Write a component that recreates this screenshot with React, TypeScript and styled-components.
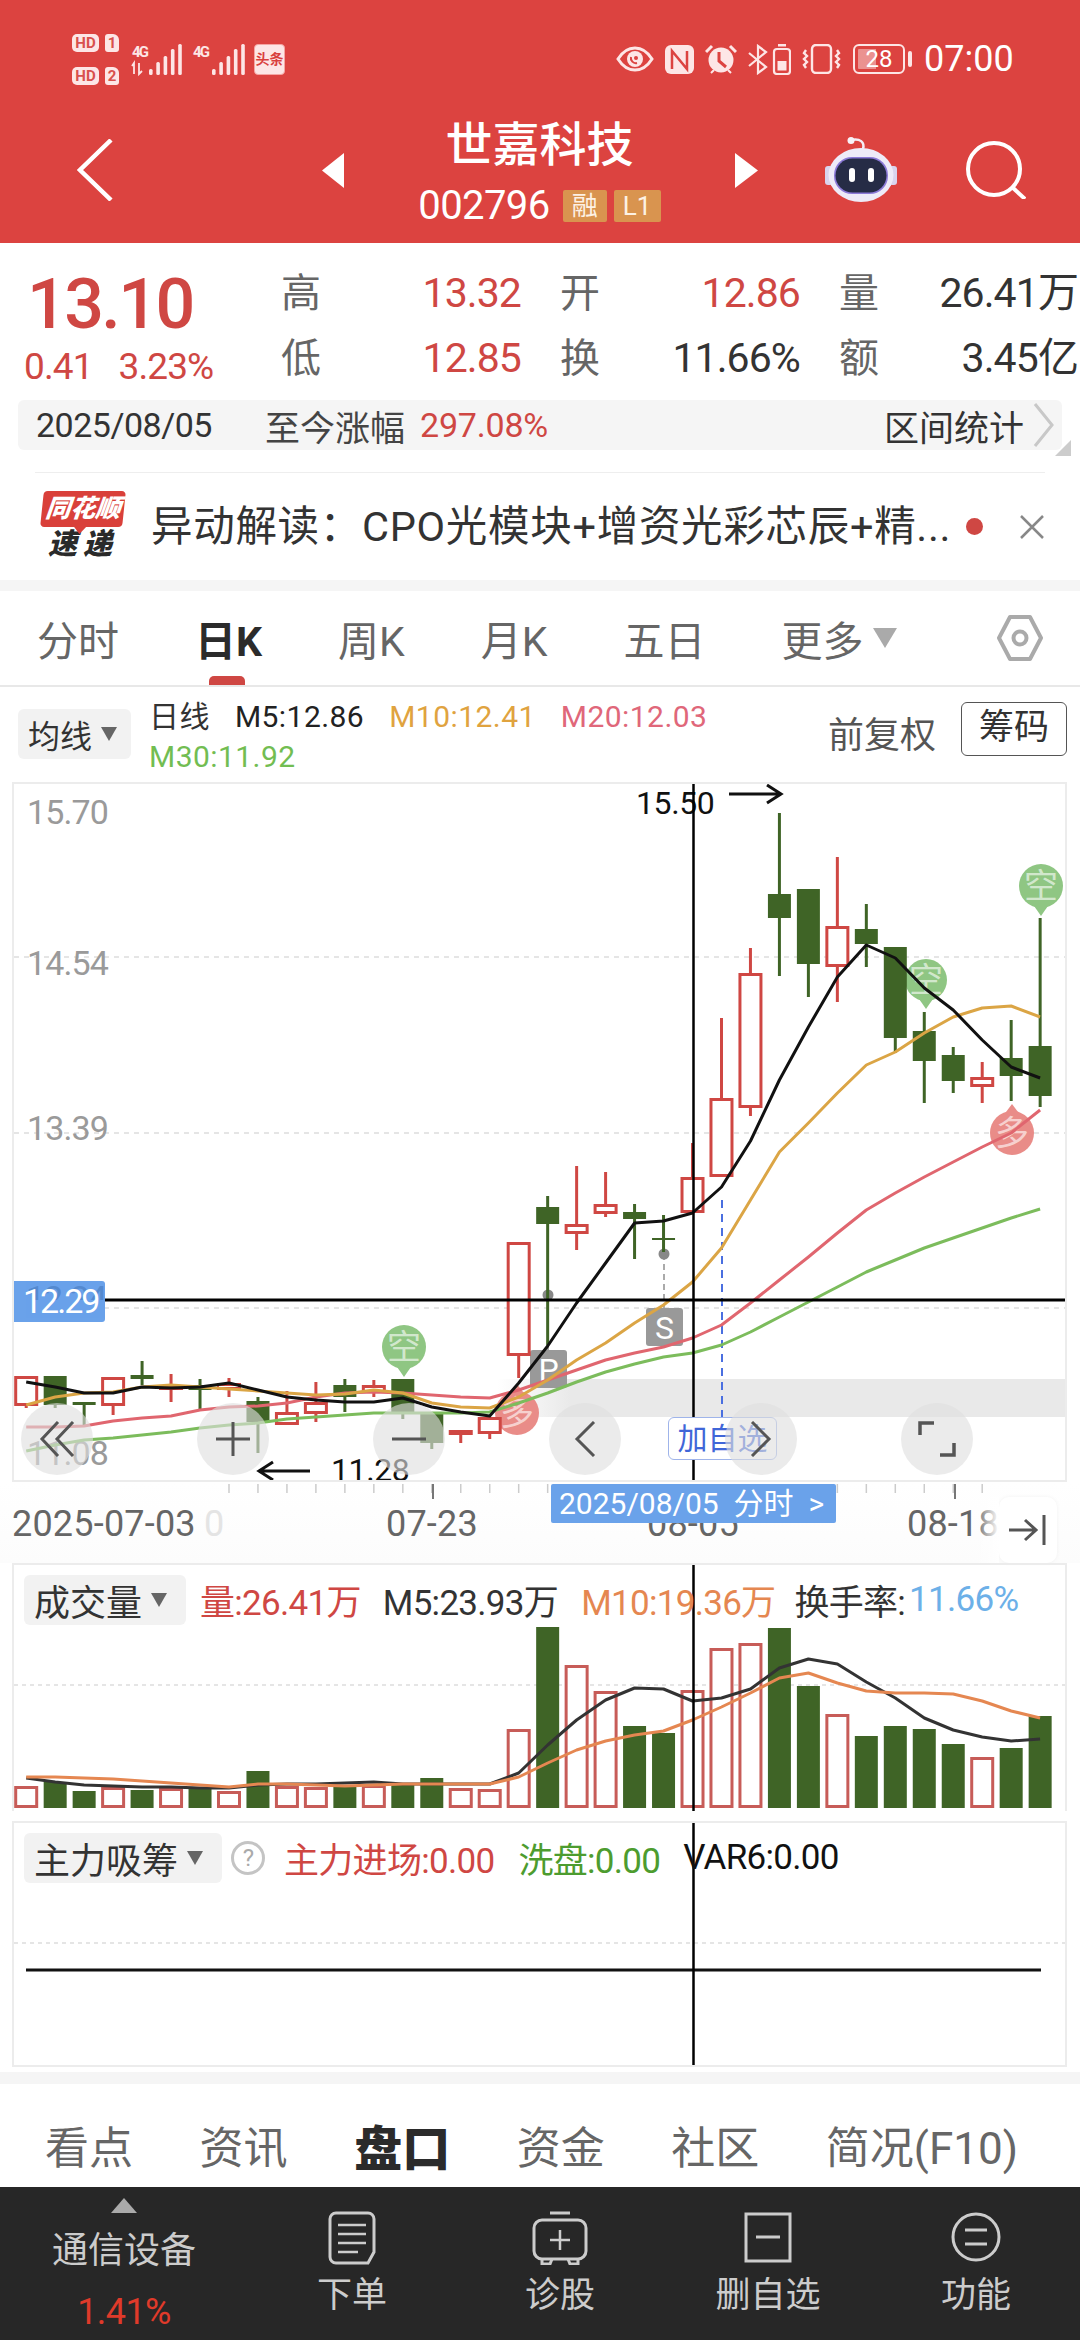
import React from 'react';
import styled, { createGlobalStyle } from 'styled-components';

const RED = '#cf4743';
const GREEN = '#3f6426';
const BLUE = '#6aa2ea';
const FONT = `Roboto, "Noto Sans CJK SC", sans-serif`;

const GlobalStyle = createGlobalStyle`
  html, body { margin: 0; padding: 0; background: #fff; }
  * { box-sizing: border-box; }
  body { font-family: ${FONT}; }
`;

const Page = styled.div`
  width: 1080px;
  height: 2340px;
  overflow: hidden;
  background: #fff;
  color: #333;
`;

/* header */
const Header = styled.header`
  height: 243px;
  background: #dc4340;
  color: #fff;
`;
const StatusBar = styled.div`
  height: 118px;
  padding: 0 72px;
  display: flex;
  align-items: center;
  justify-content: space-between;
`;
const StatusGroup = styled.div`
  display: flex;
  align-items: center;
  gap: 11px;
`;
const HdStack = styled.div`
  display: flex;
  flex-direction: column;
  gap: 15px;
  margin-right: 2px;
`;
const HdRow = styled.div`
  display: flex;
  gap: 6px;
`;
const HdBox = styled.span`
  height: 18px;
  width: 14px;
  background: #fde6e6;
  color: #d9504d;
  border-radius: 3px 6px 3px 3px;
  font-size: 15px;
  line-height: 18px;
  font-weight: 700;
  text-align: center;
  &:first-child { width: 27px; border-radius: 5px; }
`;
const NewsBadge = styled.span`
  width: 31px;
  height: 31px;
  background: #fde6e6;
  border: 1px solid #f5a5a3;
  color: #d9403d;
  border-radius: 4px;
  font-size: 14px;
  line-height: 29px;
  font-weight: 700;
  text-align: center;
  white-space: nowrap;
`;
const ClockText = styled.span`
  font-size: 36px;
  line-height: 40px;
  letter-spacing: 0;
  width: 84px;
`;
const BatteryBody = styled.div`
  width: 52px;
  height: 30px;
  border: 2px solid #fde6e6;
  border-radius: 6px;
  background: linear-gradient(90deg, rgba(255, 255, 255, 0.42) 0 42%, transparent 42%);
  background-origin: content-box;
  background-clip: content-box;
  padding: 3px;
  font-size: 24px;
  line-height: 20px;
  text-align: center;
  position: relative;
  margin-right: 8px;
  &::after {
    content: '';
    position: absolute;
    right: -9px;
    top: 5px;
    width: 4px;
    height: 16px;
    background: #fde6e6;
    border-radius: 2px;
  }
`;
const NavBar = styled.div`
  height: 125px;
  padding-bottom: 21px;
  display: grid;
  grid-template-columns: 322px 22px 391px 23px 1fr;
  align-items: center;
`;
const NavBack = styled.div`
  padding-left: 77px;
  display: flex;
`;
const NavTitle = styled.div`
  display: flex;
  flex-direction: column;
  align-items: center;
`;
const StockName = styled.div`
  font-size: 47px;
  line-height: 54px;
  font-weight: 500;
  margin-bottom: 18px;
`;
const CodeRow = styled.div`
  height: 32px;
  display: flex;
  align-items: center;
  gap: 7px;
`;
const StockCode = styled.span`
  font-size: 40px;
  line-height: 32px;
  letter-spacing: -0.6px;
  margin-right: 6px;
`;
const CodeBadge = styled.span<{ $w: number }>`
  width: ${p => p.$w}px;
  height: 32px;
  background: #d9944f;
  border-radius: 2px;
  font-size: 26px;
  line-height: 32px;
  text-align: center;
  color: #fdf1e4;
`;
const NavTools = styled.div`
  padding-left: 67px;
  display: flex;
  align-items: center;
  gap: 69px;
`;

/* quote */
const Quote = styled.section`
  height: 157px;
  display: flex;
`;
const PriceCol = styled.div`
  width: 281px;
  color: ${RED};
`;
const Price = styled.div`
  margin: 25px 0 7px 27px;
  font-size: 70px;
  line-height: 72px;
  letter-spacing: -2.6px;
  font-weight: 500;
`;
const Change = styled.div`
  padding-left: 24px;
  display: flex;
  gap: 26px;
  font-size: 37px;
  line-height: 40px;
  letter-spacing: -0.9px;
`;
const QuoteGrid = styled.div`
  margin-top: 18px;
  display: grid;
  grid-template-columns: 240px 240px 239px;
  grid-auto-rows: 65px;
  column-gap: 39px;
`;
const QuoteCell = styled.div`
  display: flex;
  justify-content: space-between;
  align-items: center;
`;
const QuoteLabel = styled.span`
  font-size: 40px;
  line-height: 65px;
  color: #666;
`;
const QuoteValue = styled.span<{ $red?: boolean }>`
  font-size: 41px;
  line-height: 65px;
  letter-spacing: -0.9px;
  color: ${p => (p.$red ? RED : '#333')};
  white-space: nowrap;
`;
const DateBar = styled.div`
  margin: 0 18px;
  height: 50px;
  padding: 0 8px 0 18px;
  background: #f5f5f5;
  border-radius: 6px;
  display: flex;
  align-items: center;
  font-size: 34px;
  position: relative;
  &::after {
    content: '';
    position: absolute;
    right: -9px;
    bottom: -6px;
    border-style: solid;
    border-width: 0 0 16px 16px;
    border-color: transparent transparent #ccc transparent;
  }
`;
const DateText = styled.span`
  width: 229px;
  letter-spacing: -0.5px;
  color: #333;
`;
const DateLabel = styled.span`
  font-size: 35px;
  color: #444;
  margin-right: 15px;
`;
const DateGain = styled.span`
  color: ${RED};
  letter-spacing: -0.2px;
`;
const DateLink = styled.span`
  margin-left: auto;
  font-size: 35px;
  color: #333;
  margin-right: 9px;
`;
const Divider = styled.div`
  margin: 22px 35px 0;
  height: 1px;
  background: #eee;
`;
const News = styled.div`
  height: 107px;
  padding: 0 36px 0 41px;
  display: flex;
  align-items: center;
`;
const NewsLogo = styled.div`
  width: 84px;
  height: 71px;
  margin-right: 26px;
  display: flex;
  flex-direction: column;
  align-items: center;
  font-style: italic;
  font-weight: 900;
`;
const NewsLogoTop = styled.div`
  width: 82px;
  height: 36px;
  background: #d9403a;
  color: #fff;
  font-size: 25px;
  line-height: 36px;
  text-align: center;
  border-radius: 4px;
  transform: skewX(-6deg);
  position: relative;
  &::after {
    content: '';
    position: absolute;
    left: 34px;
    bottom: -7px;
    border-style: solid;
    border-width: 7px 6px 0 6px;
    border-color: #d9403a transparent transparent transparent;
  }
`;
const NewsLogoBottom = styled.div`
  font-size: 29px;
  line-height: 35px;
  letter-spacing: 6px;
  color: #2a2a2a;
`;
const NewsText = styled.div`
  width: 815px;
  font-size: 41.5px;
  line-height: 50px;
  color: #333;
  white-space: nowrap;
  letter-spacing: 0.7px;
`;
const NewsDot = styled.span`
  width: 17px;
  height: 17px;
  border-radius: 50%;
  background: ${RED};
`;
const NewsClose = styled.span`
  margin-left: auto;
  display: flex;
`;
const Band = styled.div<{ $h: number }>`
  height: ${p => p.$h}px;
  background: #f5f5f5;
`;

/* period tabs */
const PeriodTabs = styled.nav`
  height: 96px;
  padding: 0 37px;
  border-bottom: 2px solid #e8e8e8;
  display: flex;
  align-items: center;
  gap: 76px;
`;
const PeriodTab = styled.div<{ $active?: boolean }>`
  height: 94px;
  display: flex;
  align-items: center;
  font-size: 41px;
  font-weight: ${p => (p.$active ? 700 : 400)};
  color: ${p => (p.$active ? '#2b2b2b' : '#666')};
  position: relative;
  ${p =>
    p.$active &&
    `&::after {
      content: '';
      position: absolute;
      left: 14px;
      bottom: 0;
      width: 36px;
      height: 9px;
      border-radius: 5px 5px 0 0;
      background: ${RED};
    }`}
`;
const MoreCaret = styled.span`
  margin-left: 9px;
  border-style: solid;
  border-width: 20px 12px 0 12px;
  border-color: #aaa transparent transparent transparent;
`;
const SettingsIcon = styled.svg`
  margin-left: auto;
`;

/* legend */
const LegendRow = styled.div`
  height: 95px;
  padding: 0 13px 0 18px;
  display: flex;
  align-items: flex-start;
`;
const Dropdown = styled.div<{ $w: number; $fs?: number }>`
  width: ${p => p.$w}px;
  height: 50px;
  background: #f2f2f2;
  border-radius: 6px;
  display: flex;
  align-items: center;
  padding-left: 10px;
  gap: 9px;
  font-size: ${p => p.$fs ?? 36}px;
  letter-spacing: 0;
  color: #333;
  white-space: nowrap;
`;
const Caret = styled.span`
  border-style: solid;
  border-width: 14px 8px 0 8px;
  border-color: #666 transparent transparent transparent;
`;
const MaDropdown = styled(Dropdown)`
  margin-top: 22px;
`;
const MaLegend = styled.div`
  margin: 10px 0 0 18px;
  font-size: 30px;
  line-height: 40px;
`;
const MaLine = styled.div`
  display: flex;
  gap: 25px;
  white-space: nowrap;
`;
const MaValue = styled.span<{ $c: string }>`
  color: ${p => p.$c};
  letter-spacing: 0.45px;
`;
const LegendRight = styled.div`
  margin-left: auto;
  margin-top: 13px;
  display: flex;
  align-items: center;
  gap: 25px;
`;
const AdjustText = styled.span`
  font-size: 36px;
  padding-top: 6px;
  color: #555;
`;
const ChipButton = styled.div`
  width: 106px;
  height: 54px;
  border: 1px solid #555;
  border-radius: 6px;
  font-size: 35px;
  line-height: 50px;
  text-align: center;
  color: #333;
`;

/* charts */
const ChartFrame = styled.div<{ $h: number; $noBottom?: boolean }>`
  margin: 0 13px 0 12px;
  height: ${p => p.$h}px;
  border: 2px solid #ececec;
  ${p => p.$noBottom && 'border-bottom: 0;'}
  position: relative;
  overflow: hidden;
`;
const ChartSvg = styled.svg`
  display: block;
  font-family: ${FONT};
`;
const AxisPrice = styled.text`
  font-size: 34px;
  letter-spacing: -0.9px;
  fill: #9a9a9a;
`;
const MarkPrice = styled.text`
  font-size: 32px;
  letter-spacing: -0.4px;
  fill: #111;
`;
const BubbleText = styled.text`
  font-size: 34px;
  fill: #fff;
  fill-opacity: 0.62;
  text-anchor: middle;
`;
const MarkerText = styled.text`
  font-size: 32px;
  fill: #fff;
  text-anchor: middle;
`;
const CrossLabel = styled.div`
  position: absolute;
  left: -2px;
  top: 497px;
  width: 93px;
  height: 41px;
  border-radius: 3px;
  background: ${BLUE};
  color: #fff;
  font-size: 34px;
  line-height: 41px;
  letter-spacing: -2px;
  padding-left: 11px;
  overflow: hidden;
`;
const GhostPrice = styled.span`
  position: absolute;
  left: 14px;
  top: 0;
  height: 19px;
  overflow: hidden;
  color: #4c7fc4;
  font-size: 34px;
  line-height: 34px;
  letter-spacing: -1px;
  opacity: 0.7;
`;
const CrossValue = styled.span`
  position: relative;
`;
const WatchTag = styled.div`
  position: absolute;
  left: 654px;
  top: 633px;
  width: 109px;
  height: 43px;
  border: 1px solid #9fb4ea;
  border-radius: 6px;
  background: #fff;
  color: #3f66d8;
  font-size: 30px;
  line-height: 41px;
  text-align: center;
`;
const ZoomBar = styled.div`
  position: absolute;
  left: 7px;
  top: 619px;
  width: 952px;
  display: flex;
  justify-content: space-between;
`;
const ZoomButton = styled.div`
  width: 72px;
  height: 72px;
  border-radius: 50%;
  background: rgba(222, 222, 222, 0.62);
  display: flex;
  align-items: center;
  justify-content: center;
`;
const AxisRow = styled.div`
  height: 81px;
  position: relative;
  background: linear-gradient(#fff, #fcfcfc);
`;
const AxisDate = styled.text<{ $ghost?: boolean }>`
  font-size: 36px;
  fill: ${p => (p.$ghost ? '#e4e4e4' : '#666')};
  letter-spacing: 0.2px;
`;
const DateTip = styled.div`
  position: absolute;
  left: 551px;
  top: 2px;
  width: 285px;
  height: 39px;
  background: ${BLUE};
  border-radius: 2px;
  color: #fff;
  font-size: 30px;
  line-height: 39px;
  padding-left: 8px;
  white-space: pre;
`;
const JumpButton = styled.div`
  position: absolute;
  right: 23px;
  top: 15px;
  width: 58px;
  height: 66px;
  background: #fff;
  border-radius: 10px;
  box-shadow: 0 0 4px rgba(0, 0, 0, 0.05);
  display: flex;
  align-items: center;
  justify-content: center;
  &::before {
    content: '';
    position: absolute;
    left: -24px;
    top: 0;
    width: 24px;
    height: 66px;
    background: linear-gradient(90deg, rgba(255, 255, 255, 0), #fff);
  }
`;
const PanelLegend = styled.div<{ $top: number }>`
  position: absolute;
  left: 10px;
  top: ${p => p.$top}px;
  display: flex;
  align-items: center;
  font-size: 35px;
  letter-spacing: -0.7px;
  white-space: nowrap;
`;
const LegendValue = styled.span<{ $c: string; $ml: number }>`
  color: ${p => p.$c};
  margin-left: ${p => p.$ml}px;
`;
const HelpMark = styled.span`
  width: 34px;
  height: 34px;
  margin-left: 9px;
  border: 3px solid #c4c4c4;
  border-radius: 50%;
  color: #aaa;
  font-size: 24px;
  line-height: 28px;
  text-align: center;
`;
const PanelGap = styled.div`
  height: 10px;
`;
const EndGap = styled.div`
  height: 5px;
`;

/* bottom tabs + dock */
const InfoTabs = styled.nav`
  height: 103px;
  padding: 19px 62px 0 45px;
  display: flex;
  align-items: center;
  justify-content: space-between;
`;
const InfoTab = styled.span<{ $active?: boolean }>`
  font-size: ${p => (p.$active ? 48 : 44)}px;
  font-weight: ${p => (p.$active ? 900 : 400)};
  color: ${p => (p.$active ? '#2b2b2b' : '#666')};
`;
const Dock = styled.footer`
  height: 153px;
  background: #272727;
  display: grid;
  grid-template-columns: 248px repeat(4, 208px);
  color: #ccc;
`;
const SectorCell = styled.div`
  padding-top: 11px;
  display: flex;
  flex-direction: column;
  align-items: center;
`;
const SectorArrow = styled.span`
  border-style: solid;
  border-width: 0 13px 15px 13px;
  border-color: transparent transparent #aaa transparent;
`;
const SectorName = styled.span`
  margin-top: 18px;
  font-size: 36px;
  line-height: 40px;
`;
const SectorChange = styled.span`
  margin-top: 21px;
  font-size: 36px;
  line-height: 40px;
  letter-spacing: -0.6px;
  color: #e03a2a;
`;
const DockItem = styled.div`
  padding-top: 24px;
  display: flex;
  flex-direction: column;
  align-items: center;
  font-size: 35px;
  line-height: 40px;
`;
const DockIcon = styled.svg`
  display: block;
  margin-bottom: 11px;
`;

/* chart data, all in page px */
type Candle = [number, number, number, number, 'r' | 'g'];
const candles: Candle[] = [
  [1376, 1376, 1406, 1408, 'r'], [1376, 1376, 1405, 1408, 'g'], [1402, 1402, 1405, 1427, 'g'],
  [1377, 1377, 1406, 1415, 'r'], [1361, 1375, 1379, 1385, 'g'], [1374, 1385, 1387, 1402, 'r'],
  [1379, 1385, 1390, 1411, 'g'], [1378, 1383, 1390, 1397, 'r'], [1397, 1401, 1422, 1453, 'g'],
  [1391, 1412, 1425, 1425, 'r'], [1382, 1402, 1414, 1422, 'r'], [1379, 1385, 1397, 1412, 'g'],
  [1380, 1385, 1393, 1397, 'r'], [1379, 1379, 1412, 1419, 'g'], [1414, 1414, 1443, 1449, 'g'],
  [1430, 1430, 1435, 1443, 'r'], [1417, 1417, 1434, 1439, 'r'], [1242, 1242, 1356, 1378, 'r'],
  [1196, 1207, 1224, 1345, 'g'], [1166, 1224, 1234, 1250, 'r'], [1172, 1204, 1214, 1217, 'r'],
  [1204, 1212, 1219, 1259, 'g'], [1215, 1238, 1239, 1252, 'g'], [1143, 1177, 1213, 1213, 'r'],
  [1018, 1098, 1177, 1177, 'r'], [948, 973, 1108, 1116, 'r'], [813, 894, 918, 976, 'g'],
  [889, 889, 964, 997, 'g'], [857, 926, 967, 1002, 'r'], [904, 929, 944, 967, 'g'],
  [947, 947, 1038, 1053, 'g'], [1012, 1031, 1061, 1103, 'g'], [1047, 1055, 1081, 1093, 'g'],
  [1062, 1077, 1087, 1103, 'r'], [1020, 1058, 1076, 1101, 'g'], [918, 1046, 1096, 1107, 'g'],
];
const ma5 = [1382, 1387, 1393, 1393, 1387, 1388, 1387, 1383, 1390, 1397, 1400, 1402, 1402, 1398, 1407, 1412, 1416, 1383, 1346, 1303, 1263, 1223, 1221, 1213, 1187, 1141, 1080, 1027, 977, 945, 958, 988, 1010, 1040, 1067, 1078];
const ma10 = [1405, 1397, 1393, 1392, 1387, 1385, 1387, 1389, 1391, 1393, 1395, 1394, 1390, 1393, 1403, 1407, 1408, 1397, 1380, 1360, 1343, 1323, 1305, 1282, 1248, 1200, 1152, 1123, 1093, 1065, 1052, 1033, 1017, 1008, 1006, 1017];
const ma20 = [1427, 1427, 1426, 1421, 1418, 1416, 1410, 1407, 1406, 1403, 1397, 1393, 1392, 1393, 1395, 1397, 1398, 1390, 1380, 1370, 1360, 1353, 1347, 1338, 1325, 1303, 1280, 1257, 1233, 1210, 1193, 1177, 1162, 1147, 1133, 1110];
const ma30 = [1451, 1445, 1440, 1438, 1435, 1432, 1428, 1425, 1423, 1419, 1417, 1415, 1413, 1413, 1413, 1413, 1412, 1403, 1393, 1382, 1372, 1364, 1357, 1353, 1345, 1332, 1317, 1302, 1287, 1272, 1260, 1248, 1238, 1228, 1218, 1209];
const volumes = [1786, 1782, 1791, 1787, 1790, 1788, 1788, 1791, 1771, 1786, 1787, 1785, 1785, 1785, 1778, 1788, 1789, 1729, 1627, 1665, 1691, 1726, 1733, 1690, 1648, 1643, 1628, 1686, 1714, 1736, 1726, 1729, 1744, 1757, 1748, 1716];
const volM5 = [1778, 1782, 1785, 1786, 1787, 1787, 1788, 1788, 1785, 1784, 1784, 1783, 1782, 1784, 1784, 1784, 1784, 1773, 1745, 1720, 1700, 1688, 1689, 1701, 1698, 1689, 1668, 1659, 1664, 1682, 1698, 1718, 1730, 1737, 1741, 1739];
const volM10 = [1777, 1777, 1778, 1779, 1781, 1783, 1785, 1787, 1784, 1784, 1785, 1786, 1785, 1784, 1784, 1784, 1784, 1777, 1763, 1750, 1741, 1735, 1731, 1720, 1707, 1693, 1678, 1673, 1683, 1691, 1693, 1693, 1694, 1701, 1711, 1718];

const X = (i: number) => 26.2 + 28.97 * i;
const pts = (ys: number[]) => ys.map((y, i) => `${X(i).toFixed(1)},${y}`).join(' ');
const CROSS_X = 693.5;

const Line = ({ ys, c, w = 3 }: { ys: number[]; c: string; w?: number }) => (
  <polyline points={pts(ys)} fill="none" stroke={c} strokeWidth={w} strokeLinejoin="round" />
);

const Bubble = ({ x, y, r, up, label, c }: { x: number; y: number; r: number; up?: boolean; label: string; c: string }) => {
  const tipY = up ? y - r - 7 : y + r + 8;
  const baseY = up ? y - r + 5 : y + r - 5;
  return (
    <g>
      <circle cx={x} cy={y} r={r} fill={c} />
      <path d={`M${x - 9} ${baseY}L${x} ${tipY}L${x + 9} ${baseY}Z`} fill={c} />
      <BubbleText x={x} y={y + 12}>{label}</BubbleText>
    </g>
  );
};

const Signal = ({ shift, arrows }: { shift: number; arrows?: boolean }) => (
  <svg width="50" height="31" viewBox="0 0 50 31" fill="#fde6e6" overflow="visible">
    <text x="0" y="13" fontSize="15" fontWeight="700" fontFamily="Roboto" textLength="17">4G</text>
    {arrows && <path d="M2 30V19l-2 3M7 19v11l3-3" stroke="#fde6e6" strokeWidth="1.8" fill="none" />}
    {[25, 18, 12, 5, 0].map((top, k) => (
      <rect key={k} x={shift + k * 7.3} y={top} width="3.6" height={31 - top} rx="1.5" />
    ))}
  </svg>
);

const Header_ = () => (
  <Header>
    <StatusBar>
      <StatusGroup>
        <HdStack>
          <HdRow><HdBox>HD</HdBox><HdBox>1</HdBox></HdRow>
          <HdRow><HdBox>HD</HdBox><HdBox>2</HdBox></HdRow>
        </HdStack>
        <Signal shift={17} arrows />
        <Signal shift={19} />
        <NewsBadge>头条</NewsBadge>
      </StatusGroup>
      <StatusGroup>
        <svg width="38" height="26" viewBox="0 0 38 26">
          <path d="M2 13C7 5 13 2 19 2s12 3 17 11c-5 8-11 11-17 11S7 21 2 13Z" fill="none" stroke="#fde6e6" strokeWidth="3" />
          <circle cx="19" cy="13" r="8" fill="#fde6e6" />
          <path d="M15 11a5 5 0 0 0 6 6" fill="none" stroke="#dc4340" strokeWidth="2" />
          <circle cx="20" cy="12" r="2" fill="#dc4340" />
        </svg>
        <svg width="29" height="29" viewBox="0 0 29 29">
          <rect width="29" height="29" rx="6" fill="#fde6e6" />
          <path d="M7 24V6l15 18V6" fill="none" stroke="#dc4340" strokeWidth="2.5" />
        </svg>
        <svg width="32" height="30" viewBox="0 0 32 30">
          <circle cx="16" cy="16" r="12.5" fill="#fde6e6" />
          <path d="M14 8v9l7 6" fill="none" stroke="#dc4340" strokeWidth="3" />
          <path d="M1 8l6-6M31 8l-6-6" stroke="#fde6e6" strokeWidth="3" />
          <path d="M6 29l3-3M26 29l-3-3" stroke="#fde6e6" strokeWidth="2" />
        </svg>
        <svg width="43" height="31" viewBox="0 0 43 31" fill="none" stroke="#fde6e6" strokeWidth="2.2">
          <path d="M1 9l17 14-8 6V2l8 6L1 22" />
          <rect x="26" y="5" width="16" height="25" rx="3" />
          <rect x="30" y="0" width="8" height="2.5" fill="#fde6e6" stroke="none" />
          <rect x="29.5" y="17" width="9" height="9.5" fill="#fde6e6" stroke="none" />
        </svg>
        <svg width="40" height="30" viewBox="0 0 40 30" fill="none" stroke="#fde6e6" strokeWidth="2.4">
          <rect x="10" y="1" width="19" height="28" rx="4" />
          <path d="M4 6l-2 3 3 3-3 3 3 3-3 3 2 3M35 6l2 3-3 3 3 3-3 3 3 3-2 3" />
        </svg>
        <BatteryBody>28</BatteryBody>
        <ClockText>07:00</ClockText>
      </StatusGroup>
    </StatusBar>
    <NavBar>
      <NavBack>
        <svg width="36" height="62" viewBox="0 0 36 62" fill="none" stroke="#fff" strokeWidth="4.5">
          <path d="M34 1L3 31l31 30" />
        </svg>
      </NavBack>
      <svg width="22" height="35" viewBox="0 0 22 35"><path d="M22 0v35L0 17.5Z" fill="#fff" /></svg>
      <NavTitle>
        <StockName>世嘉科技</StockName>
        <CodeRow>
          <StockCode>002796</StockCode>
          <CodeBadge $w={44}>融</CodeBadge>
          <CodeBadge $w={47}>L1</CodeBadge>
        </CodeRow>
      </NavTitle>
      <svg width="23" height="35" viewBox="0 0 23 35"><path d="M0 0v35l23-17.5Z" fill="#fff" /></svg>
      <NavTools>
        <svg width="72" height="66" viewBox="0 0 72 66">
          <path d="M26 3C35 1 40 5 38 12" fill="none" stroke="#f4eef6" strokeWidth="2.5" />
          <circle cx="26" cy="3.5" r="3.5" fill="#f8f2f8" />
          <rect x="0" y="29" width="8" height="19" rx="3" fill="#d9d4ee" />
          <rect x="64" y="29" width="8" height="19" rx="3" fill="#d9d4ee" />
          <ellipse cx="36" cy="38" rx="32.5" ry="27" fill="#eeebf8" />
          <rect x="9" y="20" width="54" height="37" rx="18" fill="#8c7ad8" />
          <rect x="10.5" y="21.5" width="51" height="34" rx="17" fill="#262c46" />
          <rect x="24" y="31" width="6" height="14" rx="3" fill="#fff" />
          <rect x="43" y="31" width="6" height="14" rx="3" fill="#fff" />
        </svg>
        <svg width="60" height="58" viewBox="0 0 60 58" fill="none" stroke="#fff" strokeWidth="4">
          <circle cx="28" cy="28" r="26" />
          <path d="M46 46l13 12" />
        </svg>
      </NavTools>
    </NavBar>
  </Header>
);

const QuoteSection = () => (
  <>
    <Quote>
      <PriceCol>
        <Price>13.10</Price>
        <Change><span>0.41</span><span>3.23%</span></Change>
      </PriceCol>
      <QuoteGrid>
        <QuoteCell><QuoteLabel>高</QuoteLabel><QuoteValue $red>13.32</QuoteValue></QuoteCell>
        <QuoteCell><QuoteLabel>开</QuoteLabel><QuoteValue $red>12.86</QuoteValue></QuoteCell>
        <QuoteCell><QuoteLabel>量</QuoteLabel><QuoteValue>26.41万</QuoteValue></QuoteCell>
        <QuoteCell><QuoteLabel>低</QuoteLabel><QuoteValue $red>12.85</QuoteValue></QuoteCell>
        <QuoteCell><QuoteLabel>换</QuoteLabel><QuoteValue>11.66%</QuoteValue></QuoteCell>
        <QuoteCell><QuoteLabel>额</QuoteLabel><QuoteValue>3.45亿</QuoteValue></QuoteCell>
      </QuoteGrid>
    </Quote>
    <DateBar>
      <DateText>2025/08/05</DateText>
      <DateLabel>至今涨幅</DateLabel>
      <DateGain>297.08%</DateGain>
      <DateLink>区间统计</DateLink>
      <svg width="21" height="46" viewBox="0 0 21 46" fill="none" stroke="#c8c8c8" strokeWidth="3">
        <path d="M2 2l17 21L2 44" />
      </svg>
    </DateBar>
    <Divider />
    <News>
      <NewsLogo>
        <NewsLogoTop>同花顺</NewsLogoTop>
        <NewsLogoBottom>速递</NewsLogoBottom>
      </NewsLogo>
      <NewsText>异动解读：CPO光模块+增资光彩芯辰+精...</NewsText>
      <NewsDot />
      <NewsClose>
        <svg width="24" height="24" viewBox="0 0 24 24" fill="none" stroke="#888" strokeWidth="2.5">
          <path d="M1 1l22 22M23 1L1 23" />
        </svg>
      </NewsClose>
    </News>
    <Band $h={11} />
  </>
);

const Tabs_ = () => (
  <>
    <PeriodTabs>
      <PeriodTab>分时</PeriodTab>
      <PeriodTab $active>日K</PeriodTab>
      <PeriodTab>周K</PeriodTab>
      <PeriodTab>月K</PeriodTab>
      <PeriodTab>五日</PeriodTab>
      <PeriodTab>更多<MoreCaret /></PeriodTab>
      <SettingsIcon width="46" height="46" viewBox="0 0 46 46" fill="none" stroke="#aaa" strokeWidth="4">
        <path d="M13 2h20l11 21-11 21H13L2 23Z" strokeLinejoin="round" />
        <circle cx="23" cy="23" r="6.5" />
      </SettingsIcon>
    </PeriodTabs>
    <LegendRow>
      <MaDropdown $w={113} $fs={32}>均线<Caret /></MaDropdown>
      <MaLegend>
        <MaLine>
          <MaValue $c="#333">日线</MaValue>
          <MaValue $c="#222">M5:12.86</MaValue>
          <MaValue $c="#e0a33f">M10:12.41</MaValue>
          <MaValue $c="#e0677a">M20:12.03</MaValue>
        </MaLine>
        <MaLine><MaValue $c="#72bd52">M30:11.92</MaValue></MaLine>
      </MaLegend>
      <LegendRight>
        <AdjustText>前复权</AdjustText>
        <ChipButton>筹码</ChipButton>
      </LegendRight>
    </LegendRow>
  </>
);

const MainChart = () => (
  <ChartFrame $h={700}>
    <ChartSvg width="1051" height="696" viewBox="14 784 1051 696">
      <defs>
        <linearGradient id="hoverBand" x1="0" x2="1" y1="0" y2="0">
          <stop offset="0.46" stopColor="#e9e9e9" stopOpacity="0" />
          <stop offset="0.53" stopColor="#e9e9e9" />
        </linearGradient>
      </defs>
      <rect x="14" y="1379" width="1051" height="38" fill="url(#hoverBand)" />
      {[957, 1133, 1308].map(y => (
        <line key={y} x1="14" x2="1065" y1={y} y2={y} stroke="#ddd" strokeWidth="1.5" strokeDasharray="5 5" />
      ))}
      <AxisPrice x="27" y="824">15.70</AxisPrice>
      <AxisPrice x="27" y="975">14.54</AxisPrice>
      <AxisPrice x="27" y="1140">13.39</AxisPrice>
      <AxisPrice x="27" y="1465">11.08</AxisPrice>

      <Bubble x={404} y={1347} r={22} label="空" c="#8fc683" />
      <Bubble x={926} y={980} r={21} label="空" c="#8fc683" />
      <Bubble x={1041} y={886} r={22} label="空" c="#8fc683" />
      <Bubble x={1012} y={1133} r={22} up label="多" c="#e98c88" />
      <Bubble x={517} y={1413} r={22} up label="多" c="#e98c88" />

      <line x1="548" x2="548" y1="1295" y2="1352" stroke="#aaa" strokeWidth="2" strokeDasharray="6 4" />
      <circle cx="548" cy="1295" r="5.5" fill="#888" />
      <rect x="530" y="1350" width="37" height="38" rx="3" fill="#999" />
      <MarkerText x="548.5" y="1381">P</MarkerText>
      <line x1="664" x2="664" y1="1254" y2="1310" stroke="#aaa" strokeWidth="2" strokeDasharray="6 4" />
      <circle cx="664" cy="1254" r="5.5" fill="#888" />
      <rect x="646" y="1308" width="37" height="38" rx="3" fill="#999" />
      <MarkerText x="664.5" y="1339">S</MarkerText>

      <line x1="722" x2="722" y1="1200" y2="1417" stroke="#4a6fe0" strokeWidth="2" strokeDasharray="8 6" />

      {candles.map(([wt, bt, bb, wb, kind], i) => {
        const x = X(i);
        const c = kind === 'r' ? RED : GREEN;
        return (
          <g key={i}>
            <line x1={x} x2={x} y1={wt} y2={bt} stroke={c} strokeWidth="3" />
            <line x1={x} x2={x} y1={bb} y2={wb} stroke={c} strokeWidth="3" />
            {kind === 'r' ? (
              <rect x={x - 10.5} y={bt + 1.5} width="21" height={Math.max(bb - bt - 3, 2)} fill="#fff" stroke={c} strokeWidth="3" />
            ) : (
              <rect x={x - 11.5} y={bt} width="23" height={Math.max(bb - bt, 2)} fill={c} />
            )}
          </g>
        );
      })}
      <Line ys={ma30} c="#7cbc5c" />
      <Line ys={ma20} c="#e0666f" />
      <Line ys={ma10} c="#dba545" />
      <Line ys={ma5} c="#111" />

      <MarkPrice x="636" y="814">15.50</MarkPrice>
      <path d="M729 794h51M767 785l14 9-14 9" fill="none" stroke="#111" strokeWidth="3" />
      <MarkPrice x="331" y="1481">11.28</MarkPrice>
      <path d="M310 1471h-51M273 1462l-14 9 14 9" fill="none" stroke="#111" strokeWidth="3" />

      <line x1="14" x2="1065" y1="1300" y2="1300" stroke="#000" strokeWidth="3" />
      <line x1={CROSS_X} x2={CROSS_X} y1="784" y2="1480" stroke="#000" strokeWidth="2.5" />
    </ChartSvg>
    <CrossLabel>
      <GhostPrice>12.24</GhostPrice>
      <CrossValue>12.29</CrossValue>
    </CrossLabel>
    <WatchTag>加自选</WatchTag>
    <ZoomBar>
      <ZoomButton>
        <svg width="36" height="36" viewBox="0 0 36 36" fill="none" stroke="#555" strokeWidth="3">
          <path d="M19 1L3 18l16 17M34 1L18 18l16 17" />
        </svg>
      </ZoomButton>
      <ZoomButton>
        <svg width="34" height="34" viewBox="0 0 34 34" stroke="#555" strokeWidth="3"><path d="M0 17h34M17 0v34" /></svg>
      </ZoomButton>
      <ZoomButton>
        <svg width="34" height="34" viewBox="0 0 34 34" stroke="#555" strokeWidth="3"><path d="M0 17h34" /></svg>
      </ZoomButton>
      <ZoomButton>
        <svg width="22" height="36" viewBox="0 0 22 36" fill="none" stroke="#555" strokeWidth="3"><path d="M20 1L3 18l17 17" /></svg>
      </ZoomButton>
      <ZoomButton>
        <svg width="22" height="36" viewBox="0 0 22 36" fill="none" stroke="#555" strokeWidth="3"><path d="M2 1l17 17L2 35" /></svg>
      </ZoomButton>
      <ZoomButton>
        <svg width="38" height="36" viewBox="0 0 38 36" fill="none" stroke="#555" strokeWidth="3.5"><path d="M2 14V2h14M36 22v12H22" /></svg>
      </ZoomButton>
    </ZoomBar>
  </ChartFrame>
);

const TimeAxis = () => (
  <AxisRow>
    <ChartSvg width="1080" height="81" viewBox="0 1482 1080 81">
      {Array.from({ length: 27 }, (_, k) => k + 7).map(i => (
        <line key={i} x1={X(i)} x2={X(i)} y1="1484" y2="1493" stroke="#ccc" strokeWidth="1.5" />
      ))}
      <line x1="433" x2="433" y1="1484" y2="1499" stroke="#777" strokeWidth="2" />
      <line x1="955" x2="955" y1="1484" y2="1499" stroke="#777" strokeWidth="2" />
      <AxisDate $ghost x="204" y="1536">0</AxisDate>
      <AxisDate x="12" y="1536">2025-07-03</AxisDate>
      <AxisDate x="386" y="1536">07-23</AxisDate>
      <AxisDate x="647" y="1536">08-05</AxisDate>
      <AxisDate x="907" y="1536">08-18</AxisDate>
    </ChartSvg>
    <DateTip>2025/08/05  分时  {'>'}</DateTip>
    <JumpButton>
      <svg width="38" height="30" viewBox="0 0 38 30" fill="none" stroke="#555" strokeWidth="3">
        <path d="M0 15h26M16 5l11 10-11 10M35 0v30" />
      </svg>
    </JumpButton>
  </AxisRow>
);

const VolumeChart = () => (
  <ChartFrame $h={248} $noBottom>
    <ChartSvg width="1051" height="246" viewBox="14 1565 1051 246">
      <line x1="14" x2="1065" y1="1685" y2="1685" stroke="#ddd" strokeWidth="1.5" strokeDasharray="4 4" />
      {volumes.map((top, i) =>
        candles[i][4] === 'r' ? (
          <rect key={i} x={X(i) - 10.5} y={top + 1.5} width="21" height={1808 - top - 3} fill="#fff" stroke="#c75c58" strokeWidth="3" />
        ) : (
          <rect key={i} x={X(i) - 11.5} y={top} width="23" height={1808 - top} fill={GREEN} />
        ),
      )}
      <Line ys={volM5} c="#333" />
      <Line ys={volM10} c="#e58751" />
      <line x1={CROSS_X} x2={CROSS_X} y1="1565" y2="1811" stroke="#000" strokeWidth="2.5" />
    </ChartSvg>
    <PanelLegend $top={9}>
      <Dropdown $w={162}>成交量<Caret /></Dropdown>
      <LegendValue $c={RED} $ml={14}>量:26.41万</LegendValue>
      <LegendValue $c="#333" $ml={22}>M5:23.93万</LegendValue>
      <LegendValue $c="#e58751" $ml={23}>M10:19.36万</LegendValue>
      <LegendValue $c="#333" $ml={19}>换手率:</LegendValue>
      <LegendValue $c="#6cb0e8" $ml={4}>11.66%</LegendValue>
    </PanelLegend>
  </ChartFrame>
);

const SignalChart = () => (
  <ChartFrame $h={246}>
    <ChartSvg width="1051" height="242" viewBox="14 1823 1051 242">
      <line x1="14" x2="1065" y1="1943" y2="1943" stroke="#ddd" strokeWidth="1.5" strokeDasharray="4 4" />
      <line x1="26" x2="1041" y1="1970" y2="1970" stroke="#111" strokeWidth="3" />
      <line x1={CROSS_X} x2={CROSS_X} y1="1823" y2="2065" stroke="#000" strokeWidth="2.5" />
    </ChartSvg>
    <PanelLegend $top={9}>
      <Dropdown $w={198}>主力吸筹<Caret /></Dropdown>
      <HelpMark>?</HelpMark>
      <LegendValue $c={RED} $ml={19}>主力进场:0.00</LegendValue>
      <LegendValue $c="#4d9c2f" $ml={24}>洗盘:0.00</LegendValue>
      <LegendValue $c="#111" $ml={23}>VAR6:0.00</LegendValue>
    </PanelLegend>
  </ChartFrame>
);

const Dock_ = () => (
  <Dock>
    <SectorCell>
      <SectorArrow />
      <SectorName>通信设备</SectorName>
      <SectorChange>1.41%</SectorChange>
    </SectorCell>
    <DockItem>
      <DockIcon width="48" height="54" viewBox="0 0 48 54" fill="none" stroke="#ccc" strokeWidth="3">
        <path d="M8 2h32a6 6 0 0 1 6 6v33l-6 11H8a6 6 0 0 1-6-6V8a6 6 0 0 1 6-6Z" />
        <path d="M10 14h28M10 23h28M10 32h28M10 41h20" strokeWidth="2.5" />
      </DockIcon>
      下单
    </DockItem>
    <DockItem>
      <DockIcon width="56" height="54" viewBox="0 0 56 54" fill="none" stroke="#ccc" strokeWidth="3">
        <path d="M18 2h20" />
        <rect x="2" y="9" width="52" height="39" rx="8" />
        <path d="M28 19v20M18 29h20" strokeWidth="2.5" />
        <path d="M10 48v5h8l2-5M46 48v5h-8l-2-5" />
      </DockIcon>
      诊股
    </DockItem>
    <DockItem>
      <DockIcon width="48" height="54" viewBox="0 0 48 54" fill="none" stroke="#ccc" strokeWidth="3">
        <rect x="2" y="3" width="44" height="47" />
        <path d="M12 26h24" />
      </DockIcon>
      删自选
    </DockItem>
    <DockItem>
      <DockIcon width="50" height="54" viewBox="0 0 50 54" fill="none" stroke="#ccc" strokeWidth="3">
        <circle cx="25" cy="26" r="23" />
        <path d="M14 19h22M14 33h22" />
      </DockIcon>
      功能
    </DockItem>
  </Dock>
);

export default function App() {
  return (
    <Page>
      <GlobalStyle />
      <Header_ />
      <QuoteSection />
      <Tabs_ />
      <MainChart />
      <TimeAxis />
      <VolumeChart />
      <PanelGap />
      <SignalChart />
      <EndGap />
      <Band $h={12} />
      <InfoTabs>
        <InfoTab>看点</InfoTab>
        <InfoTab>资讯</InfoTab>
        <InfoTab $active>盘口</InfoTab>
        <InfoTab>资金</InfoTab>
        <InfoTab>社区</InfoTab>
        <InfoTab>简况(F10)</InfoTab>
      </InfoTabs>
      <Dock_ />
    </Page>
  );
}
